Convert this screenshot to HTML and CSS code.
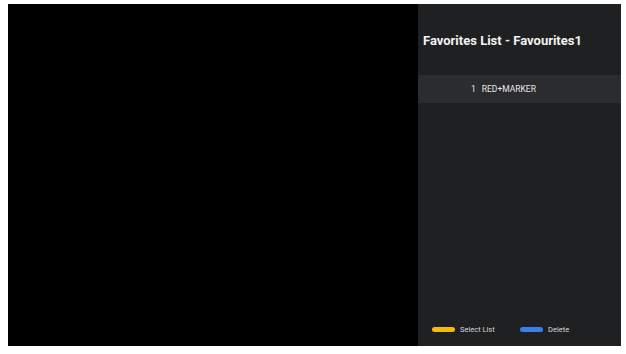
FILE: index.html
```html
<!DOCTYPE html>
<html>
<head>
<meta charset="utf-8">
<link rel="stylesheet" href="styles.css">
</head>
<body>
<div class="screen">
  <div class="video"></div>
  <aside class="panel">
    <h1 class="title">Favorites List - Favourites1</h1>
    <ul class="list">
      <li class="item selected"><span class="num">1</span><span class="name">RED+MARKER</span></li>
    </ul>
    <div class="footer">
      <div class="hint"><span class="pill yellow"></span><span class="label">Select List</span></div>
      <div class="hint"><span class="pill blue"></span><span class="label">Delete</span></div>
    </div>
  </aside>
</div>
</body>
</html>
```
FILE: styles.css
```css
html, body {
  margin: 0;
  padding: 0;
  background: #ffffff;
}
body {
  padding: 4px 5px 8px 8px;
  font-family: Roboto, "Liberation Sans", sans-serif;
}
.screen {
  display: flex;
  height: 342px;
  width: 613px;
}
.video {
  width: 410px;
  background: #000000;
}
.panel {
  flex: 1;
  background: #1f2022;
  display: flex;
  flex-direction: column;
}
.title {
  margin: 0;
  padding: 29px 0 0 5px;
  height: 41px;
  box-sizing: border-box;
  font-size: 13px;
  font-weight: 700;
  color: #f2f2f2;
  line-height: 16px;
}
.list {
  list-style: none;
  margin: 0;
  padding: 0;
  flex: 1;
}
.item {
  height: 28px;
  display: flex;
  align-items: center;
  padding-left: 53px;
  font-size: 8.5px;
  color: #e8e8e8;
  margin-top: 30px;
}
.item.selected {
  background: #2b2c2f;
}
.num {
  margin-right: 6px;
}
.footer {
  display: flex;
  align-items: center;
  height: 20px;
  padding: 0 0 7px 14px;
}
.hint {
  display: flex;
  align-items: center;
  width: 88px;
}
.pill {
  width: 23px;
  height: 5px;
  border-radius: 3px;
  margin-right: 5px;
}
.yellow { background: #f5b90f; }
.blue { background: #3d7fe8; }
.label {
  font-size: 7.5px;
  color: #d8d8d8;
}
```
